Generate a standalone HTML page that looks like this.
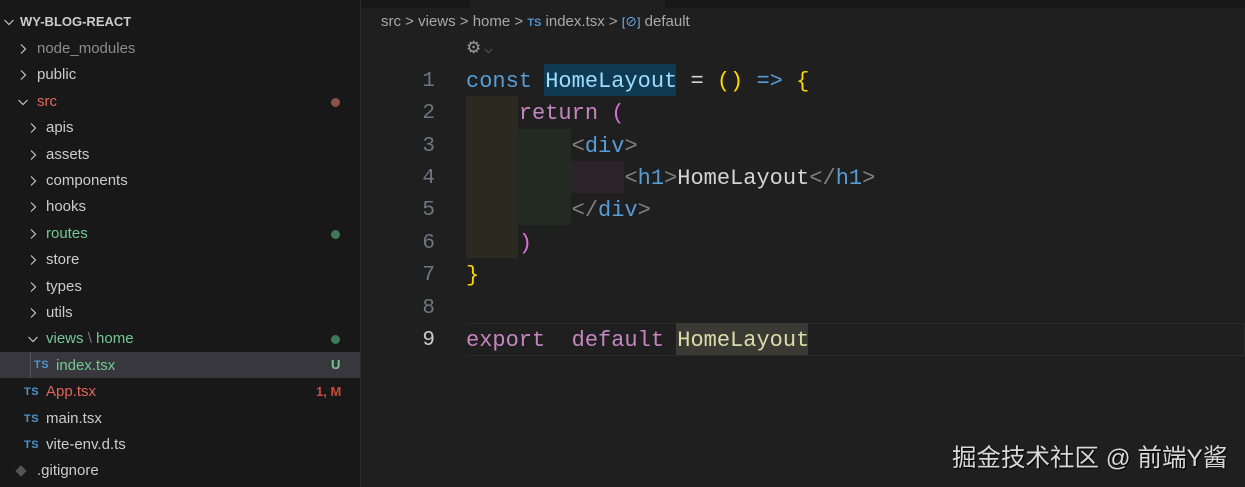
<!DOCTYPE html>
<html><head><meta charset="utf-8"><style>
*{margin:0;padding:0;box-sizing:border-box}
body{width:1245px;height:487px;background:#1f1f1f;overflow:hidden;position:relative;font-family:"Liberation Sans","Noto Sans CJK SC",sans-serif}
#side{position:absolute;left:0;top:0;width:361px;height:487px;background:#181818;border-right:1px solid #2b2b2b}
.r{position:absolute;left:0;width:360px;height:26px;line-height:26px;font-size:15px;color:#cccccc;white-space:nowrap}
.r svg{position:absolute;top:7px}
.dot{position:absolute;left:331px;top:9px;width:9px;height:9px;border-radius:50%}
.ts{position:absolute;top:0;font-size:11px;font-weight:bold;color:#4e94ce;letter-spacing:.5px}
.g{color:#73c991}
#ed{position:absolute;left:361px;top:0;right:0;bottom:0}
.bc{position:absolute;left:20px;top:13px;font-size:15px;color:#a9a9a9;white-space:nowrap}
.ln{position:absolute;left:0;width:74px;text-align:right;font-family:"Liberation Mono",monospace;font-size:21px;color:#6e7681;height:32px;line-height:36px}
.cd{position:absolute;left:105px;font-family:"Liberation Mono",monospace;font-size:22px;height:32px;line-height:36px;white-space:pre;color:#d4d4d4}
.k{color:#569cd6}.p{color:#c586c0}.y{color:#ffd700}.m{color:#da70d6}.t{color:#808080}.v{color:#9cdcfe}.f{color:#dcdcaa}
</style></head><body>
<svg width="0" height="0" style="position:absolute"><defs>
<symbol id="cr" viewBox="0 0 12 12"><path d="M4 1.5L8.5 6L4 10.5" fill="none" stroke="#c5c5c5" stroke-width="1.2"/></symbol>
<symbol id="cd" viewBox="0 0 12 12"><path d="M1.5 4L6 8.5L10.5 4" fill="none" stroke="#c5c5c5" stroke-width="1.2"/></symbol>
</defs></svg>
<div id="side">
<div class="r" style="top:9px;font-weight:bold;font-size:13px;color:#ccc"><svg width="12" height="12" style="left:3px"><use href="#cd"/></svg><span style="position:absolute;left:20px">WY-BLOG-REACT</span></div>
<div class="r" style="top:36px"><svg width="12" height="12" style="left:17px"><use href="#cr"/></svg><span style="position:absolute;left:37px;color:#8c8c8c">node_modules</span></div>
<div class="r" style="top:62px"><svg width="12" height="12" style="left:17px"><use href="#cr"/></svg><span style="position:absolute;left:37px">public</span></div>
<div class="r" style="top:89px"><svg width="12" height="12" style="left:17px"><use href="#cd"/></svg><span style="position:absolute;left:37px;color:#e2665c">src</span><span class="dot" style="background:#8b5248"></span></div>
<div class="r" style="top:115px"><svg width="12" height="12" style="left:27px"><use href="#cr"/></svg><span style="position:absolute;left:46px">apis</span></div>
<div class="r" style="top:142px"><svg width="12" height="12" style="left:27px"><use href="#cr"/></svg><span style="position:absolute;left:46px">assets</span></div>
<div class="r" style="top:168px"><svg width="12" height="12" style="left:27px"><use href="#cr"/></svg><span style="position:absolute;left:46px">components</span></div>
<div class="r" style="top:194px"><svg width="12" height="12" style="left:27px"><use href="#cr"/></svg><span style="position:absolute;left:46px">hooks</span></div>
<div class="r" style="top:221px"><svg width="12" height="12" style="left:27px"><use href="#cr"/></svg><span style="position:absolute;left:46px" class="g">routes</span><span class="dot" style="background:#3d7a5a"></span></div>
<div class="r" style="top:247px"><svg width="12" height="12" style="left:27px"><use href="#cr"/></svg><span style="position:absolute;left:46px">store</span></div>
<div class="r" style="top:274px"><svg width="12" height="12" style="left:27px"><use href="#cr"/></svg><span style="position:absolute;left:46px">types</span></div>
<div class="r" style="top:300px"><svg width="12" height="12" style="left:27px"><use href="#cr"/></svg><span style="position:absolute;left:46px">utils</span></div>
<div class="r" style="top:326px"><svg width="12" height="12" style="left:27px"><use href="#cd"/></svg><span style="position:absolute;left:46px" class="g">views <span style="color:#777">\</span> home</span><span class="dot" style="background:#3d7a5a"></span></div>
<div class="r" style="top:352px;background:#37373d"><span style="position:absolute;left:30px;top:0;width:1px;height:26px;background:#585858"></span><span class="ts" style="left:34px">TS</span><span style="position:absolute;left:56px;top:1px" class="g">index.tsx</span><span style="position:absolute;left:331px;font-size:13px;font-weight:bold;color:#73c991">U</span></div>
<div class="r" style="top:379px"><span class="ts" style="left:24px">TS</span><span style="position:absolute;left:46px;color:#e2665c">App.tsx</span><span style="position:absolute;left:316px;font-size:13px;font-weight:bold;color:#c74e39">1, M</span></div>
<div class="r" style="top:406px"><span class="ts" style="left:24px">TS</span><span style="position:absolute;left:46px">main.tsx</span></div>
<div class="r" style="top:432px"><span class="ts" style="left:24px">TS</span><span style="position:absolute;left:46px">vite-env.d.ts</span></div>
<div class="r" style="top:458px"><span style="position:absolute;left:17px;top:9px;width:8px;height:8px;background:#555;transform:rotate(45deg)"></span><span style="position:absolute;left:37px">.gitignore</span></div>
</div>
<div id="ed">
<div style="position:absolute;left:0;top:0;width:109px;height:8px;background:#181818"></div>
<div style="position:absolute;left:304px;top:0;right:0;height:8px;background:#181818"></div>
<div class="bc">src &gt; views &gt; home &gt; <span style="color:#4e94ce;font-size:11px;font-weight:bold">TS</span> index.tsx &gt; <span style="color:#75beff;font-size:12px">[⊘]</span> default</div>
<div style="position:absolute;left:105px;top:38px;color:#999;font-size:17px">⚙<span style="font-size:11px"> ⌵</span></div>
<div style="position:absolute;left:105px;top:96px;width:52px;height:162px;background:#2a2a20"></div>
<div style="position:absolute;left:157px;top:129px;width:53px;height:96px;background:#232a22"></div>
<div style="position:absolute;left:210px;top:161px;width:53px;height:32px;background:#2a2329"></div>
<div style="position:absolute;left:183px;top:64px;width:132px;height:32px;background:#0f3a52"></div>
<div style="position:absolute;left:105px;top:323px;right:0;height:33px;border:1px solid #2a2a2a;border-left:none"></div>
<div style="position:absolute;left:315px;top:323px;width:132px;height:32px;background:#3a3a34"></div>
<div class="ln" style="top:64px">1</div><div class="cd" style="top:64px"><span class="k">const</span> <span class="v">HomeLayout</span> = <span class="y">()</span> <span class="k">=&gt;</span> <span class="y">{</span></div>
<div class="ln" style="top:96px">2</div><div class="cd" style="top:96px">    <span class="p">return</span> <span class="m">(</span></div>
<div class="ln" style="top:129px">3</div><div class="cd" style="top:129px">        <span class="t">&lt;</span><span class="k">div</span><span class="t">&gt;</span></div>
<div class="ln" style="top:161px">4</div><div class="cd" style="top:161px">            <span class="t">&lt;</span><span class="k">h1</span><span class="t">&gt;</span>HomeLayout<span class="t">&lt;/</span><span class="k">h1</span><span class="t">&gt;</span></div>
<div class="ln" style="top:193px">5</div><div class="cd" style="top:193px">        <span class="t">&lt;/</span><span class="k">div</span><span class="t">&gt;</span></div>
<div class="ln" style="top:226px">6</div><div class="cd" style="top:226px">    <span class="m">)</span></div>
<div class="ln" style="top:258px">7</div><div class="cd" style="top:258px"><span class="y">}</span></div>
<div class="ln" style="top:291px">8</div>
<div class="ln" style="top:323px;color:#ccc">9</div><div class="cd" style="top:323px"><span class="p">export</span>  <span class="p">default</span> <span class="f">HomeLayout</span></div>
<div style="position:absolute;left:591px;top:439px;font-size:24.5px;color:#d8d8d8;white-space:nowrap;text-shadow:1px 1px 1px #000">掘金技术社区 @ 前端Y酱</div>
</div>
</body></html>
